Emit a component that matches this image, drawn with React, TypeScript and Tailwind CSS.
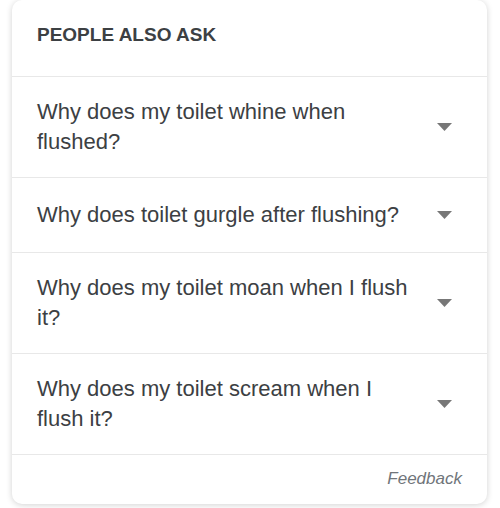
import React from 'react';

const questions: string[] = [
  'Why does my toilet whine when flushed?',
  'Why does toilet gurgle after flushing?',
  'Why does my toilet moan when I flush it?',
  'Why does my toilet scream when I flush it?',
];

const Caret: React.FC = () => (
  <svg width="15" height="8" viewBox="0 0 15 8" className="shrink-0">
    <path d="M0 0 L15 0 L7.5 8 Z" fill="#777777" />
  </svg>
);

const App: React.FC = () => {
  return (
    <div
      className="min-h-[508px] bg-white pl-[12px] pr-[13px]"
      style={{ fontFamily: '"Liberation Sans", Arial, sans-serif' }}
    >
      <div className="rounded-[10px] bg-white shadow-[0_1px_6px_rgba(0,0,0,0.18)]">
        {/* header */}
        <div className="h-[77px] border-b border-[#e8e8e8] pl-[25px] pt-[21px]">
          <h2 className="text-[19px] leading-[28px] font-bold text-[#3c4043]">
            PEOPLE ALSO ASK
          </h2>
        </div>

        {questions.map((q, i) => (
          <div
            key={i}
            className="flex min-h-[75px] items-center border-b border-[#e8e8e8] py-[20px] pl-[25px] pr-[35px]"
          >
            <div className="flex-1 pr-[20px] text-[22px] leading-[30px] text-[#3c4043]">
              {q}
            </div>
            <Caret />
          </div>
        ))}

        {/* footer */}
        <div className="flex h-[49px] justify-end pr-[25px] pt-[12px]">
          <span className="text-[17px] leading-[24px] italic text-[#70757a]">Feedback</span>
        </div>
      </div>
    </div>
  );
};

export default App;
